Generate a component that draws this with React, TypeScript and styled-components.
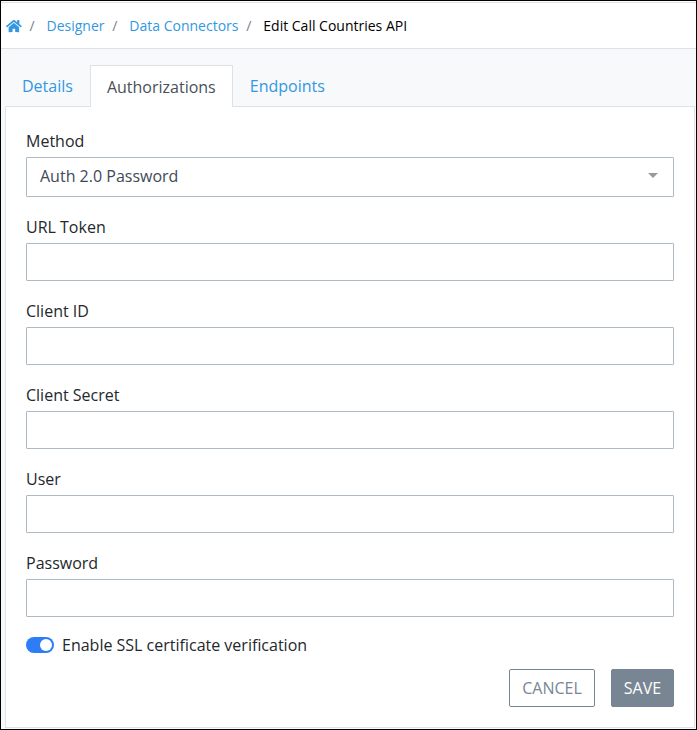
import React, { useState } from "react";
import styled, { createGlobalStyle } from "styled-components";
import { FaHome } from "react-icons/fa";

const GlobalStyle = createGlobalStyle`
  *, *::before, *::after { box-sizing: border-box; }
  body {
    margin: 0;
    font-family: "Open Sans", sans-serif;
    font-size: 16px;
    line-height: 24px;
    color: #23282c;
    background: #fff;
  }
`;

const Frame = styled.div`
  display: flex;
  flex-direction: column;
  height: 730px;
  padding-top: 1px;
  border: 1px solid #000;
  background: #fff;
`;

const Breadcrumb = styled.nav`
  display: flex;
  align-items: center;
  flex: 0 0 47px;
  padding-left: 5px;
  border-top: 1px solid #e4e0e5;
  border-bottom: 1px solid #dee1e5;
  font-size: 14px;
  line-height: 21px;
  white-space: nowrap;
`;

const Crumb = styled.a`
  color: #3397e1;
  text-decoration: none;
  cursor: pointer;
`;

const HomeLink = styled(Crumb)`
  display: flex;
  svg { width: 15.75px; height: 14px; }
`;

const Current = styled.span`
  color: #000;
`;

const Slash = styled.span`
  width: 24.8px;
  padding-left: 7.8px;
  color: #73818f;
`;

const Main = styled.main`
  display: flex;
  flex-direction: column;
  flex: 1;
  padding: 16px 1px 1px 4px;
  background: #f7f9fb;
`;

const Tabs = styled.div`
  display: flex;
  height: 42px;
  margin-bottom: -1px;
  z-index: 1;
`;

const Tab = styled.button<{ $active?: boolean }>`
  height: 42px;
  padding: 0 16px;
  border: 1px solid ${(p) => (p.$active ? "#dee1e5" : "transparent")};
  border-bottom: ${(p) => (p.$active ? "0" : "1px solid transparent")};
  background: ${(p) => (p.$active ? "#fff" : "transparent")};
  color: ${(p) => (p.$active ? "#495057" : "#3397e1")};
  font: inherit;
  cursor: pointer;
`;

const Panel = styled.section`
  flex: 1;
  padding: 22px 20px 0;
  border: 1px solid #dee1e5;
  background: #fff;
`;

const Field = styled.label`
  display: flex;
  flex-direction: column;
  gap: 4px;
  margin-bottom: 18px;
`;

const Input = styled.input`
  width: 100%;
  height: 38px;
  padding: 6px 12px;
  border: 1px solid #afb9c2;
  border-radius: 1px;
  outline: 0;
  background: #fff;
  color: #3e4a59;
  font: inherit;
`;

const Select = styled.div`
  display: flex;
  align-items: center;
  justify-content: space-between;
  height: 40px;
  padding: 0 15px 2px 13px;
  border: 1px solid #afb9c2;
  border-radius: 1px;
  color: #3e4a59;
`;

const Caret = styled.span`
  margin-bottom: 2px;
  border: 5px solid transparent;
  border-top-color: #999;
  border-bottom: 0;
`;

const SwitchRow = styled.div`
  display: flex;
  align-items: center;
  gap: 8px;
  height: 24px;
  margin-top: -2px;
`;

const Switch = styled.button<{ $on: boolean }>`
  display: flex;
  align-items: center;
  justify-content: ${(p) => (p.$on ? "flex-end" : "flex-start")};
  width: 28px;
  height: 16px;
  padding: 0 2px;
  border: 0;
  border-radius: 8px;
  background: ${(p) => (p.$on ? "#2f7df6" : "#adb5bd")};
`;

const Knob = styled.span`
  width: 12px;
  height: 12px;
  border-radius: 50%;
  background: #fff;
`;

const Actions = styled.div`
  display: flex;
  justify-content: flex-end;
  gap: 16px;
  margin-top: 12px;
`;

const Button = styled.button<{ $solid?: boolean; $width: number }>`
  width: ${(p) => p.$width}px;
  height: 38px;
  padding: 0;
  border: 1px solid #768592;
  border-radius: 2px;
  background: ${(p) => (p.$solid ? "#788693" : "#fff")};
  color: ${(p) => (p.$solid ? "#fff" : "#788693")};
  font: inherit;
  cursor: pointer;
`;

const tabs = ["Details", "Authorizations", "Endpoints"];
const fields = ["URL Token", "Client ID", "Client Secret", "User", "Password"];

export default function App() {
  const [tab, setTab] = useState("Authorizations");
  const [ssl, setSsl] = useState(true);

  return (
    <Frame>
      <GlobalStyle />
      <Breadcrumb>
        <HomeLink aria-label="Home"><FaHome /></HomeLink>
        <Slash>/</Slash>
        <Crumb>Designer</Crumb>
        <Slash>/</Slash>
        <Crumb>Data Connectors</Crumb>
        <Slash>/</Slash>
        <Current>Edit Call Countries API</Current>
      </Breadcrumb>
      <Main>
        <Tabs>
          {tabs.map((name) => (
            <Tab key={name} $active={name === tab} onClick={() => setTab(name)}>
              {name}
            </Tab>
          ))}
        </Tabs>
        <Panel>
          <Field as="div">
            <span>Method</span>
            <Select>
              Auth 2.0 Password
              <Caret />
            </Select>
          </Field>
          {fields.map((name) => (
            <Field key={name}>
              <span>{name}</span>
              <Input type={name === "Password" ? "password" : "text"} />
            </Field>
          ))}
          <SwitchRow>
            <Switch $on={ssl} onClick={() => setSsl(!ssl)} aria-label="Enable SSL">
              <Knob />
            </Switch>
            <span>Enable SSL certificate verification</span>
          </SwitchRow>
          <Actions>
            <Button $width={86}>CANCEL</Button>
            <Button $width={63} $solid>SAVE</Button>
          </Actions>
        </Panel>
      </Main>
    </Frame>
  );
}
